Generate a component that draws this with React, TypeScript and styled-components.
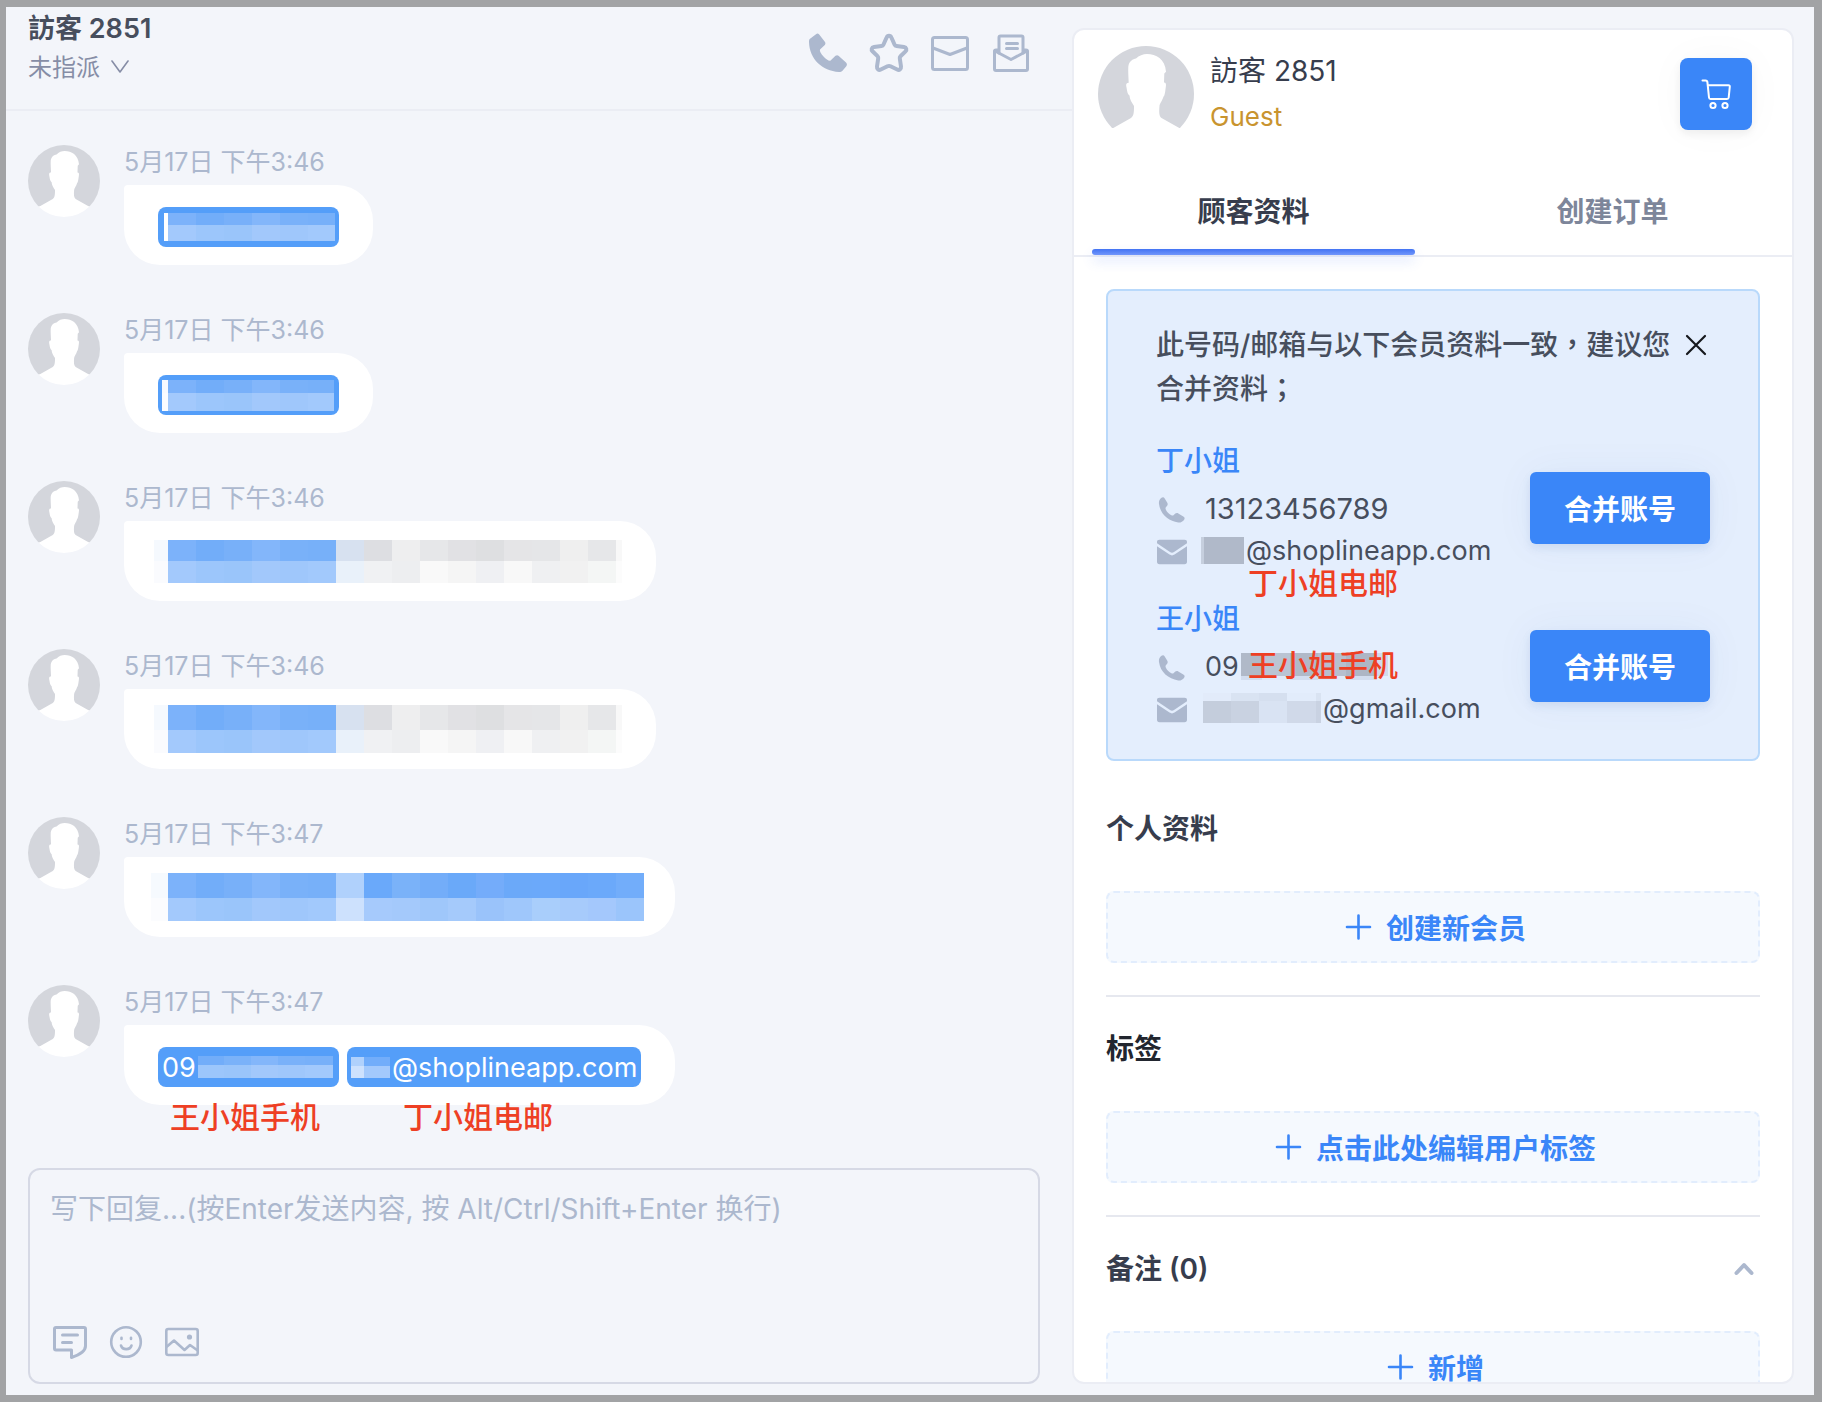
import React from 'react';
import styled, { createGlobalStyle, css } from 'styled-components';

const c = {
  frame: '#a2a3a5',
  page: '#f3f5fa',
  line: '#ebedf4',
  ink: '#373d4d',
  inkSoft: '#474e5d',
  muted: '#acb8ce',
  blue: '#3a86f8',
  chip: '#549ef9',
  red: '#ee3f24',
};

const GlobalStyle = createGlobalStyle`
  *, *::before, *::after { box-sizing: border-box; }
  body { margin: 0; }
  body, button, textarea, select {
    font-family: Inter, "Noto Sans CJK SC", sans-serif;
  }
  button { border: 0; padding: 0; background: none; cursor: pointer; }
  svg { display: block; flex: none; }
`;

const Frame = styled.div`
  display: grid;
  grid-template-columns: minmax(0, 1066fr) minmax(0, 722fr);
  height: 100vh;
  padding-right: 20px;
  border: solid ${c.frame};
  border-width: 7px 8px 7px 6px;
  background: ${c.page};
  color: ${c.inkSoft};
  font-size: 28px;
  overflow: hidden;
`;

/* ---------- conversation ---------- */

const Chat = styled.main`
  display: flex;
  flex-direction: column;
  min-height: 0;
`;

const ChatHeader = styled.header`
  display: flex;
  justify-content: space-between;
  align-items: flex-start;
  height: 104px;
  padding: 4px 41px 0 22px;
  border-bottom: 2px solid ${c.line};
`;

const ChatTitle = styled.h1`
  margin: 0 0 5px;
  font-size: 27px;
  line-height: 36px;
  font-weight: 600;
  font-family: Inter, "Noto Sans CJK TC", sans-serif;
`;

const Assignee = styled.label`
  display: flex;
  align-items: center;
  gap: 10px;
  color: #868da6;
`;

const AssigneeSelect = styled.select`
  appearance: none;
  border: 0;
  padding: 0;
  background: transparent;
  color: inherit;
  font-size: 24px;
  line-height: 32px;
`;

const HeaderActions = styled.div`
  display: flex;
  gap: 21px;
  padding-top: 22px;
  color: ${c.muted};
`;

const IconButton = styled.button`
  display: flex;
  color: inherit;
`;

const Messages = styled.ol`
  flex: 1;
  display: flex;
  flex-direction: column;
  gap: 48px;
  min-height: 0;
  margin: 0;
  padding: 34px 22px 0;
  list-style: none;
  overflow: hidden;
`;

const Message = styled.li`
  display: flex;
  align-items: flex-start;
  gap: 24px;
`;

const Time = styled.time`
  display: block;
  margin-bottom: 6px;
  color: ${c.muted};
  font-size: 25px;
  line-height: 34px;
`;

const Bubble = styled.div<{ $left?: number; $right?: number }>`
  position: relative;
  display: inline-flex;
  align-items: center;
  gap: 8px;
  height: 80px;
  padding: 0 ${(p) => p.$right ?? 34}px 0 ${(p) => p.$left ?? 34}px;
  border-radius: 4px 36px 36px 36px;
  background: #fff;
`;

const Chip = styled.a<{ $width?: number }>`
  display: flex;
  align-items: center;
  gap: 2px;
  width: ${(p) => (p.$width ? `${p.$width}px` : 'auto')};
  height: 40px;
  margin-top: 4px;
  padding: 0 4px;
  border-radius: 8px;
  background: ${c.chip};
  color: #fff;
  font-size: 27px;
  text-decoration: none;
  overflow: hidden;
`;

const Note = styled.span<{ $left: number; $top: number }>`
  position: absolute;
  left: ${(p) => p.$left}px;
  top: ${(p) => p.$top}px;
  color: ${c.red};
  font-size: 30px;
  line-height: 32px;
  font-weight: 500;
  white-space: nowrap;
`;

const MosaicGrid = styled.span<{ $cols: string; $rows: string }>`
  display: grid;
  flex: none;
  grid-template-columns: ${(p) => p.$cols};
  grid-template-rows: ${(p) => p.$rows};
`;

const Cell = styled.i<{ $fill: string }>`
  background: ${(p) => p.$fill};
`;

function Mosaic({ cols, rows, fills }: { cols: string; rows: string; fills: string }) {
  return (
    <MosaicGrid $cols={cols} $rows={rows} aria-hidden="true">
      {fills.split(' ').map((f, i) => (
        <Cell key={i} $fill={`#${f}`} />
      ))}
    </MosaicGrid>
  );
}

const Composer = styled.form`
  display: flex;
  flex-direction: column;
  justify-content: space-between;
  height: 216px;
  margin: 0 32px 11px 22px;
  padding: 19px 20px 22px;
  border: 2px solid #d6d9e5;
  border-radius: 12px;
`;

const ReplyInput = styled.textarea`
  width: 100%;
  height: 80px;
  padding: 0;
  border: 0;
  outline: 0;
  resize: none;
  background: transparent;
  color: ${c.inkSoft};
  font-size: 28px;
  line-height: 40px;
  &::placeholder { color: ${c.muted}; opacity: 1; }
`;

const Tools = styled.div`
  display: flex;
  align-items: center;
  gap: 20px;
  padding-left: 2px;
  color: ${c.muted};
`;

/* ---------- customer panel ---------- */

const Panel = styled.aside`
  display: flex;
  flex-direction: column;
  min-height: 0;
  margin: 21px 0 11px;
  border: 2px solid ${c.line};
  border-radius: 12px;
  background: #fff;
  overflow: hidden;
`;

const Profile = styled.header`
  display: flex;
  align-items: center;
  gap: 16px;
  padding: 16px 40px 0 24px;
`;

const ProfileText = styled.div`
  flex: 1;
`;

const ProfileName = styled.h2`
  margin: 0 0 6px;
  color: ${c.ink};
  font-family: Inter, "Noto Sans CJK TC", sans-serif;
  font-size: 28px;
  line-height: 40px;
  font-weight: 400;
`;

const ProfileRole = styled.p`
  margin: 0;
  color: #c9942f;
  font-size: 26px;
  line-height: 40px;
`;

const CartButton = styled.button`
  display: grid;
  place-items: center;
  width: 72px;
  height: 72px;
  border-radius: 8px;
  background: ${c.blue};
  color: #fff;
  box-shadow: 0 4px 8px rgba(0, 0, 0, 0.06), 0 0 40px rgba(0, 0, 0, 0.03);
`;

const Tabs = styled.div`
  display: flex;
  flex: none;
  height: 115px;
  border-bottom: 2px solid ${c.line};
`;

const Tab = styled.button<{ $active?: boolean }>`
  position: relative;
  flex: 1;
  padding-top: 22px;
  color: ${(p) => (p.$active ? c.ink : '#7d869a')};
  font-size: 28px;
  font-weight: 600;
  ${(p) =>
    p.$active &&
    css`
      &::after {
        content: '';
        position: absolute;
        left: 18px;
        right: 18px;
        bottom: 0;
        height: 6px;
        border-radius: 3px;
        background: linear-gradient(#4273f3, #7096fb);
        box-shadow: 0 6px 12px rgba(66, 115, 243, 0.18);
      }
    `}
`;

const PanelBody = styled.div`
  flex: 1;
  min-height: 0;
  padding: 32px 32px 0;
  overflow: hidden;
`;

const Alert = styled.section`
  margin-bottom: 46px;
  padding: 32px 48px 24px;
  border: 2px solid #b9d9fb;
  border-radius: 8px;
  background: #e4eefd;
`;

const AlertHead = styled.div`
  display: flex;
  align-items: flex-start;
  justify-content: space-between;
  gap: 8px;
  margin-bottom: 28px;
`;

const AlertText = styled.p`
  flex: 1;
  margin: 0;
  font-family: Inter, "Noto Sans CJK TC", sans-serif;
  line-height: 44px;
  font-weight: 500;
`;

const CloseButton = styled.button`
  display: grid;
  place-items: center;
  width: 28px;
  height: 44px;
  color: #16181d;
`;

const Candidate = styled.div`
  display: flex;
  align-items: center;
  justify-content: space-between;
  & + & { margin-top: 20px; }
`;

const CandidateInfo = styled.div`
  padding-bottom: 6px;
`;

const CandidateName = styled.a`
  display: block;
  margin-bottom: 4px;
  color: ${c.blue};
  line-height: 44px;
  font-weight: 500;
  text-decoration: none;
`;

const ContactRow = styled.div<{ $gap: number }>`
  position: relative;
  display: flex;
  align-items: center;
  gap: ${(p) => p.$gap}px;
  height: 42px;
`;

const ContactIcon = styled.span`
  padding: 4px 0 0 1px;
  color: ${c.muted};
`;

const ContactValue = styled.span<{ $size: number }>`
  display: flex;
  align-items: center;
  gap: 2px;
  font-size: ${(p) => p.$size}px;
`;

const MergeButton = styled.button`
  width: 180px;
  height: 72px;
  border-radius: 6px;
  background: ${c.blue};
  color: #fff;
  font-size: 28px;
  font-weight: 600;
  box-shadow: 0 4px 8px rgba(40, 80, 160, 0.1), 0 0 40px rgba(40, 80, 160, 0.05);
`;

const Section = styled.section`
  padding-bottom: 32px;
  & + & {
    border-top: 2px solid #e6e8ef;
    padding-top: 30px;
  }
`;

const SectionHead = styled.div`
  display: flex;
  align-items: center;
  justify-content: space-between;
  margin-bottom: 40px;
  padding-right: 4px;
  color: ${c.muted};
`;

const SectionTitle = styled.h3<{ $dark?: boolean }>`
  margin: 0;
  color: ${(p) => (p.$dark ? '#22262f' : c.ink)};
  font-size: 28px;
  line-height: 44px;
  font-weight: 600;
`;

const AddButton = styled.button`
  display: flex;
  align-items: center;
  justify-content: center;
  gap: 10px;
  width: 100%;
  height: 72px;
  border: 2px dashed #e2edfd;
  border-radius: 8px;
  background: #f5f9fe;
  color: ${c.blue};
  font-size: 28px;
  font-weight: 600;
`;

/* ---------- drawings ---------- */

const stroke = {
  fill: 'none',
  stroke: 'currentColor',
  strokeLinecap: 'round' as const,
  strokeLinejoin: 'round' as const,
};

function Avatar({ size }: { size: number }) {
  const id = React.useId();
  return (
    <svg width={size} height={size} viewBox="0 0 96 96" aria-hidden="true">
      <clipPath id={id}>
        <circle cx="48" cy="48" r="48" />
      </clipPath>
      <g clipPath={`url(#${id})`}>
        <rect width="96" height="82" fill="#d4d6dc" />
        <path
          fill="#fff"
          d="M30.7 36.7C30.5 31 30 25 30.3 20.7C31 15 35 13 38 12.5C41 9.500 45 8 49 8C58 8 67 13 68 25.700L66.300 27.500L66 36.500C68 36.500 68.300 38 67.800 41C67.300 45 66.800 50 65.500 50.600C64.500 54.500 61.500 58 61.500 60C61 66 61 70 63.500 72L81.300 82L96 82V96H0V82H15.300L33 72C36 70 36 65 36 60C34 57 31.500 53 31.500 49.500C29 48 29 43 28.200 40C28 37.500 28.800 36.700 30.700 36.700Z"
        />
      </g>
    </svg>
  );
}

const PHONE = 'M8 1.200C9 .2 10 .2 11 1.200L17 9C17.600 10 17.600 11 16.800 12L12 16.500C11.500 18 12.500 20 15.500 23.500C18 26 20.500 28 22.300 27.700L27.500 22.800C28.500 22 29.600 22 30.500 22.700L38 29.500C39.200 30.700 39.200 32 38.300 33.200L34.500 37.800C33.800 38.600 32.500 39 31 39C14 38 1.500 26 1 9C1 7.500 1.200 6.500 2 5.800Z';

const PhoneSolid = () => (
  <svg width="40" height="40" viewBox="0 0 40 40" fill="currentColor" aria-hidden="true">
    <path d={PHONE} />
  </svg>
);

const HandsetIcon = () => (
  <svg width="30" height="26" viewBox="0 0 30 26" fill="currentColor" aria-hidden="true">
    <path d="M4.500 .8C5.800 -.1 7 .2 7.700 1.500L10.300 5.800C10.900 7 10.800 8 9.900 9L8.900 10.200C8.300 11 8.400 11.800 9 12.900C10.300 15.200 12 17 14.400 18.200C15.400 18.700 16 18.600 16.700 18L18.300 16.600C19.200 15.900 20.200 15.800 21.300 16.400L26.300 19.500C27.800 20.400 28 21.600 27 22.900C25.600 24.700 23.600 25.700 21.200 25.400C11.500 24 3.200 17 2 7C1.600 4.300 2.500 2.200 4.500 .8Z" />
  </svg>
);

const StarIcon = () => (
  <svg width="40" height="40" viewBox="0 0 40 40" {...stroke} strokeWidth="4" aria-hidden="true">
    <path d="M17.600 4.500C18.500 2.300 21.500 2.300 22.400 4.500L25.500 11.500C25.900 12.400 26.500 12.900 27.500 13L35 14C37.500 14.400 38 16.800 36.500 18.300L31.500 23.200C30.900 23.800 30.600 24.600 30.800 25.500L32 33.500C32.300 36.200 30.300 37.500 28.200 36.500L21.500 33.300C20.500 32.800 19.500 32.800 18.500 33.300L11.800 36.500C9.700 37.500 7.700 36.200 8 33.500L9.200 25.500C9.400 24.600 9.100 23.800 8.500 23.200L3.500 18.300C2 16.800 2.500 14.400 5 14L12.500 13C13.500 12.900 14.100 12.400 14.500 11.500Z" />
  </svg>
);

const MailIcon = () => (
  <svg width="40" height="40" viewBox="0 0 40 40" {...stroke} strokeWidth="3" aria-hidden="true">
    <rect x="2.500" y="4.500" width="35" height="32" rx="2" />
    <path d="M3 15L20 21.500L37 15" />
  </svg>
);

const MailOpenIcon = () => (
  <svg width="40" height="40" viewBox="0 0 40 40" {...stroke} strokeWidth="3" aria-hidden="true">
    <path d="M7.500 17H5C4 17 3.500 17.500 3.500 18.500V36C3.500 37 4 37.500 5 37.500H35C36 37.500 36.500 37 36.500 36V18.500C36.500 17.500 36 17 35 17H32.500" />
    <path d="M4 18L20 26.500L36 18" />
    <path d="M8 20V4.500C8 3.500 8.500 3 9.500 3H30.500C31.500 3 32 3.500 32 4.500V20" />
    <path d="M15.500 10.500H26.500M15.500 15.500H26.500" />
  </svg>
);

const ChevronDown = () => (
  <svg width="20" height="16" viewBox="0 0 20 16" {...stroke} strokeWidth="1.6" aria-hidden="true">
    <path d="M2 1L10 12L18 1" />
  </svg>
);

const ChevronUp = () => (
  <svg width="24" height="20" viewBox="0 0 24 20" {...stroke} strokeWidth="4" aria-hidden="true">
    <path d="M4.500 14L12 6L19.500 14" />
  </svg>
);

const NoteIcon = () => (
  <svg width="36" height="36" viewBox="0 0 36 36" {...stroke} strokeWidth="3" aria-hidden="true">
    <path d="M4 3.500H32C33 3.500 33.500 4 33.500 5V22C33.500 27 27 31 19.500 33.500V26H4C3 26 2.500 25.500 2.500 24.500V5C2.500 4 3 3.500 4 3.500Z" />
    <path d="M10.500 11H25.500M10.500 18.500H19.500" />
  </svg>
);

const SmileIcon = () => (
  <svg width="36" height="36" viewBox="0 0 36 36" {...stroke} strokeWidth="2.600" aria-hidden="true">
    <circle cx="18" cy="18" r="14.800" />
    <path d="M13.500 13.800V15M23 13.800V15M13 21.500C14.500 26.300 22 26.300 23.500 21.500" />
  </svg>
);

const ImageIcon = () => (
  <svg width="36" height="36" viewBox="0 0 36 36" {...stroke} strokeWidth="2.600" aria-hidden="true">
    <rect x="2.300" y="5" width="31.400" height="26" rx="2" />
    <path d="M3 22.500L10 16.500L20.500 26L26 21L33 26" />
    <circle cx="25.500" cy="13" r="2.600" fill="currentColor" stroke="none" />
  </svg>
);

const CartIcon = () => (
  <svg width="32" height="32" viewBox="0 0 32 32" {...stroke} strokeWidth="2" aria-hidden="true">
    <path d="M2.500 2.500H5.500C6.700 2.500 7.300 3 7.400 4.200L9 19.500C9.100 20.500 9.500 21 10.500 21H27C28 21 28.600 20.500 28.700 19.500L29.800 8.700C29.900 7.700 29.400 7.200 28.500 7.200H8" />
    <circle cx="13" cy="27.500" r="2.600" />
    <circle cx="25" cy="27.500" r="2.600" />
  </svg>
);

const CloseIcon = () => (
  <svg width="24" height="24" viewBox="0 0 24 24" {...stroke} strokeWidth="2.200" aria-hidden="true">
    <path d="M3 3L21 21M21 3L3 21" />
  </svg>
);

const EnvelopeSolid = () => (
  <svg width="30" height="26" viewBox="0 0 30 26" fill="currentColor" aria-hidden="true">
    <path d="M2.500 .8H27.500C29.200 .8 30 1.600 30 3.200V4.200L17 13C15.600 13.900 14.400 13.900 13 13L0 4.200V3.200C0 1.600 .8 .8 2.500 .8Z" />
    <path d="M0 7.200L12.500 15.600C14.200 16.700 15.800 16.700 17.500 15.600L30 7.200V22.800C30 24.400 29.200 25.200 27.500 25.200H2.500C.8 25.200 0 24.400 0 22.800Z" />
  </svg>
);

const PlusIcon = () => (
  <svg width="36" height="28" viewBox="0 0 36 28" {...stroke} strokeWidth="2.600" aria-hidden="true">
    <path d="M7 14H30M18.500 2.500V25.500" />
  </svg>
);

/* ---------- data ---------- */

const BLUE_A = '7cb2fa 72adf9 78b0f9 83b6fa 79b1f9 77b0f9';
const BLUE_B = 'a3c9fc 9cc6fb 9ac5fa a2c8fb 9fc7fb a2c9fc';
const GREY_FILLS = `f5f9fe ${BLUE_A} d7e1f0 dddee2 eeeeef e6e7e9 e1e1e4 dedfe1 e5e5e7 e5e6e8 efefef e6e7e9 f8f8f8 fafbfe ${BLUE_B} e9f1fa f0f1f3 edeef0 f9f9f9 f5f5f5 eff0f3 f8f8f8 eff0f2 f1f1f1 f4f6f5 fcfcfc`;
const LONG_FILLS = `f6fafe ${BLUE_A} b0d1fc 6aa9fa 7ab2f9 73adf9 6aa9f9 74acfa 6ba9f9 6ba9fa 69a7fa 6ba9fa 72adfa fbfcfe ${BLUE_B} cde1fd a6cafc a4c9fb 9fc7fa a5cafb 9ac3fa 9fc7fb a9cefb a7cbfb a4c8fc 9bc5fb`;

const entries: { time: string; left?: number; right?: number; body: React.ReactNode }[] = [
  {
    time: '5月17日 下午3:46',
    body: (
      <Chip href="#" $width={181} aria-label="已隐藏">
        <Mosaic cols="2px 4px repeat(5, 28px) 27px" rows="12px 16px" fills={`549ef9 ffffff ${BLUE_A} 549ef9 ffffff ${BLUE_B}`} />
      </Chip>
    ),
  },
  {
    time: '5月17日 下午3:46',
    body: (
      <Chip href="#" $width={181} aria-label="已隐藏">
        <Mosaic cols="6px repeat(5, 28px) 26px" rows="13px 18px" fills={`f8faff ${BLUE_A} fbfcff ${BLUE_B}`} />
      </Chip>
    ),
  },
  {
    time: '5月17日 下午3:46',
    left: 30,
    body: <Mosaic cols="14px repeat(16, 28px) 6px" rows="21px 22px" fills={GREY_FILLS} />,
  },
  {
    time: '5月17日 下午3:46',
    left: 30,
    body: <Mosaic cols="14px repeat(16, 28px) 6px" rows="25px 23px" fills={GREY_FILLS} />,
  },
  {
    time: '5月17日 下午3:47',
    left: 27,
    right: 31,
    body: <Mosaic cols="17px repeat(17, 28px)" rows="25px 23px" fills={LONG_FILLS} />,
  },
  {
    time: '5月17日 下午3:47',
    body: (
      <>
        <Chip href="#" $width={181}>
          09
          <Mosaic cols="26px repeat(3, 27px) 28px" rows="9px 13px" fills="72adf9 7ab2f9 83b6fa 79b1f9 77b0f9 9cc6fb 9ac5fa a2c8fb 9fc7fb a2c9fc" />
        </Chip>
        <Chip href="#">
          <Mosaic cols="13px 26px" rows="9px 12px" fills="b0d1fc 72adfa cde1fd a3c9fc" />
          @shoplineapp.com
        </Chip>
        <Note $left={46} $top={76}>王小姐手机</Note>
        <Note $left={279} $top={76}>丁小姐电邮</Note>
      </>
    ),
  },
];

export default function App() {
  return (
    <>
      <GlobalStyle />
      <Frame>
        <Chat>
          <ChatHeader>
            <div>
              <ChatTitle>訪客 2851</ChatTitle>
              <Assignee>
                <AssigneeSelect aria-label="指派" defaultValue="none">
                  <option value="none">未指派</option>
                </AssigneeSelect>
                <ChevronDown />
              </Assignee>
            </div>
            <HeaderActions>
              <IconButton aria-label="电话"><PhoneSolid /></IconButton>
              <IconButton aria-label="星标"><StarIcon /></IconButton>
              <IconButton aria-label="邮件"><MailIcon /></IconButton>
              <IconButton aria-label="已读邮件"><MailOpenIcon /></IconButton>
            </HeaderActions>
          </ChatHeader>

          <Messages>
            {entries.map((m, i) => (
              <Message key={i}>
                <Avatar size={72} />
                <div>
                  <Time>{m.time}</Time>
                  <Bubble $left={m.left} $right={m.right}>{m.body}</Bubble>
                </div>
              </Message>
            ))}
          </Messages>

          <Composer>
            <ReplyInput aria-label="回复" placeholder="写下回复...(按Enter发送内容, 按 Alt/Ctrl/Shift+Enter 换行)" />
            <Tools>
              <IconButton type="button" aria-label="快捷回复"><NoteIcon /></IconButton>
              <IconButton type="button" aria-label="表情"><SmileIcon /></IconButton>
              <IconButton type="button" aria-label="图片"><ImageIcon /></IconButton>
            </Tools>
          </Composer>
        </Chat>

        <Panel>
          <Profile>
            <Avatar size={96} />
            <ProfileText>
              <ProfileName>訪客 2851</ProfileName>
              <ProfileRole>Guest</ProfileRole>
            </ProfileText>
            <CartButton aria-label="购物车"><CartIcon /></CartButton>
          </Profile>

          <Tabs role="tablist">
            <Tab role="tab" aria-selected="true" $active>顾客资料</Tab>
            <Tab role="tab" aria-selected="false">创建订单</Tab>
          </Tabs>

          <PanelBody>
            <Alert>
              <AlertHead>
                <AlertText>此号码/邮箱与以下会员资料一致，建议您合并资料；</AlertText>
                <CloseButton aria-label="关闭"><CloseIcon /></CloseButton>
              </AlertHead>

              <Candidate>
                <CandidateInfo>
                  <CandidateName href="#">丁小姐</CandidateName>
                  <ContactRow $gap={18}>
                    <ContactIcon><HandsetIcon /></ContactIcon>
                    <ContactValue $size={29}>13123456789</ContactValue>
                  </ContactRow>
                  <ContactRow $gap={14}>
                    <ContactIcon><EnvelopeSolid /></ContactIcon>
                    <ContactValue $size={27}>
                      <Mosaic cols="3px 40px" rows="27px" fills="c6cfde b0b9c9" />
                      @shoplineapp.com
                    </ContactValue>
                    <Note $left={92} $top={38}>丁小姐电邮</Note>
                  </ContactRow>
                </CandidateInfo>
                <MergeButton>合并账号</MergeButton>
              </Candidate>

              <Candidate>
                <CandidateInfo>
                  <CandidateName href="#">王小姐</CandidateName>
                  <ContactRow $gap={18}>
                    <ContactIcon><HandsetIcon /></ContactIcon>
                    <ContactValue $size={27}>
                      09
                      <Mosaic
                        cols="21px 28px 28px 28px 28px 14px"
                        rows="23px 4px"
                        fills="b0b9c8 bac4d3 b0b9c8 b6bfce adb6c5 d0dbeb d2ddef dfe9f9 d2ddef dfe9f9 d2ddef e4eefd"
                      />
                    </ContactValue>
                    <Note $left={92} $top={4}>王小姐手机</Note>
                  </ContactRow>
                  <ContactRow $gap={16}>
                    <ContactIcon><EnvelopeSolid /></ContactIcon>
                    <ContactValue $size={27}>
                      <Mosaic
                        cols="28px 28px 28px 29px 5px"
                        rows="8px 22px"
                        fills="e2ebfa d9e3f2 d5dfef e2ecfb d9e3f2 c4cddc c9d2e1 d9e3f3 d0d9e9 c9d2e2"
                      />
                      @gmail.com
                    </ContactValue>
                  </ContactRow>
                </CandidateInfo>
                <MergeButton>合并账号</MergeButton>
              </Candidate>
            </Alert>

            <Section>
              <SectionHead><SectionTitle>个人资料</SectionTitle></SectionHead>
              <AddButton><PlusIcon />创建新会员</AddButton>
            </Section>
            <Section>
              <SectionHead><SectionTitle $dark>标签</SectionTitle></SectionHead>
              <AddButton><PlusIcon />点击此处编辑用户标签</AddButton>
            </Section>
            <Section>
              <SectionHead>
                <SectionTitle>备注 (0)</SectionTitle>
                <IconButton aria-label="收起"><ChevronUp /></IconButton>
              </SectionHead>
              <AddButton><PlusIcon />新增</AddButton>
            </Section>
          </PanelBody>
        </Panel>
      </Frame>
    </>
  );
}
